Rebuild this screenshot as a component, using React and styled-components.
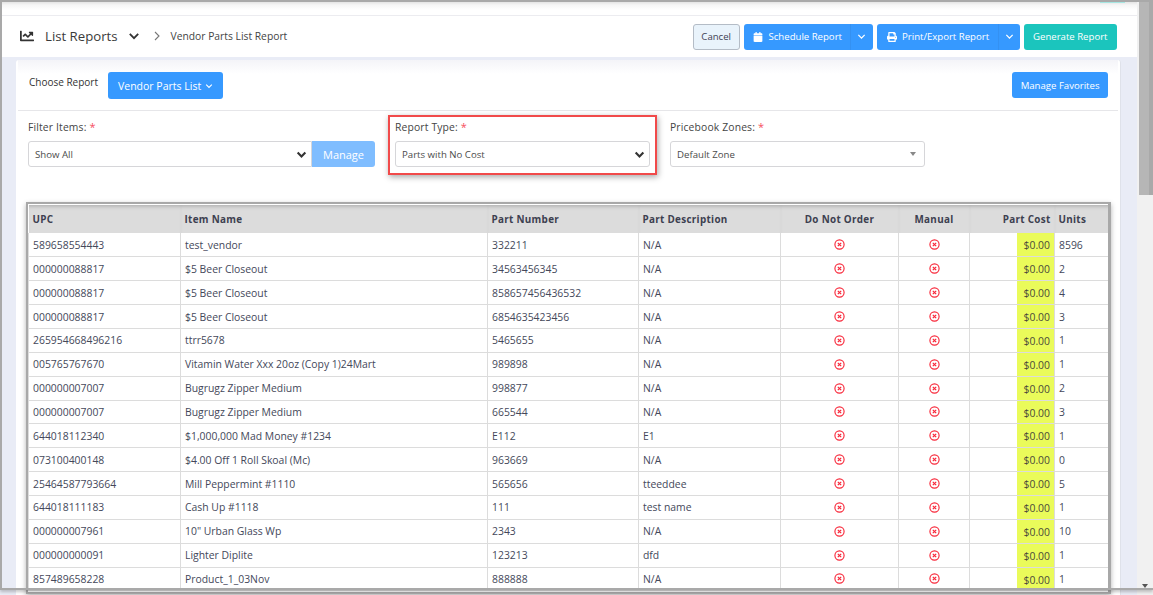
import React from "react";
import styled, { createGlobalStyle } from "styled-components";
import { FaCalendar, FaPrint, FaChartLine } from "react-icons/fa";

const rows = [
  ["589658554443", "test_vendor", "332211", "N/A", "8596"],
  ["000000088817", "$5 Beer Closeout", "34563456345", "N/A", "2"],
  ["000000088817", "$5 Beer Closeout", "858657456436532", "N/A", "4"],
  ["000000088817", "$5 Beer Closeout", "6854635423456", "N/A", "3"],
  ["265954668496216", "ttrr5678", "5465655", "N/A", "1"],
  ["005765767670", "Vitamin Water Xxx 20oz (Copy 1)24Mart", "989898", "N/A", "1"],
  ["000000007007", "Bugrugz Zipper Medium", "998877", "N/A", "2"],
  ["000000007007", "Bugrugz Zipper Medium", "665544", "N/A", "3"],
  ["644018112340", "$1,000,000 Mad Money #1234", "E112", "E1", "1"],
  ["073100400148", "$4.00 Off 1 Roll Skoal (Mc)", "963669", "N/A", "0"],
  ["25464587793664", "Mill Peppermint #1110", "565656", "tteeddee", "5"],
  ["644018111183", "Cash Up #1118", "111", "test name", "1"],
  ["000000007961", "10\" Urban Glass Wp", "2343", "N/A", "10"],
  ["000000000091", "Lighter Diplite", "123213", "dfd", "1"],
  ["857489658228", "Product_1_03Nov", "888888", "N/A", "1"],
];

const columns = [152, 307, 151, 142, 118, 71, 85, 55];

const GlobalStyle = createGlobalStyle`
  html, body { margin: 0; padding: 0; overflow: hidden; }
  body { font-family: "Open Sans", "Liberation Sans", sans-serif; color: #3f4254; }
`;

const Page = styled.div`
  position: relative;
  width: 1153px;
  height: 595px;
  overflow: hidden;
  display: flex;
  background: #fff;
`;

const Main = styled.div`
  width: 1137px;
  height: 595px;
  flex: none;
  box-sizing: border-box;
  padding-left: 2px;
  background: #e9ecf6;
  overflow: hidden;
`;

const TopStrip = styled.div`
  height: 15px;
  box-sizing: content-box;
  background: linear-gradient(#d8d8d8 0, #f6f6f6 5px, #fff 10px);
  border-bottom: 1px solid #ececf0;
  display: flex;
  justify-content: flex-end;
  padding-right: 12px;
`;

const TealSliver = styled.div`
  width: 25px;
  height: 1px;
  margin-top: 2px;
  background: #a6e6e2;
`;

const Header = styled.header`
  height: 41px;
  background: #fff;
  display: flex;
  align-items: center;
  padding: 0 20px 0 18px;
`;

const Title = styled.div`
  display: flex;
  align-items: center;
  padding-bottom: 2px;
  font-size: 13.2px;
  color: #3a3a3a;
  svg { flex: none; }
`;

const TitleText = styled.span`
  margin: 0 10px 0 11px;
`;

const CrumbArrow = styled.svg`
  margin-left: 14px;
`;

const Crumb = styled.span`
  font-size: 10.3px;
  color: #444;
  margin-left: 11px;
`;

const Actions = styled.div`
  margin-left: auto;
  display: flex;
  gap: 4px;
`;

const Button = styled.button`
  height: 26px;
  box-sizing: border-box;
  border: ${(p) => (p.$outline ? "1px solid #b4bcc6" : "none")};
  border-radius: 3px;
  background: ${(p) => (p.$outline ? "#e9f3fb" : p.$teal ? "#1bc5bd" : "#3699ff")};
  color: ${(p) => (p.$outline ? "#3f4254" : "#fff")};
  font-family: inherit;
  font-size: 9.6px;
  padding: 0 ${(p) => p.$pad || 9}px;
  display: flex;
  align-items: center;
  gap: 7px;
  white-space: nowrap;
  svg { flex: none; }
`;

const SplitLabel = styled(Button)`
  width: ${(p) => p.$w}px;
  justify-content: flex-start;
  gap: 5.5px;
  border-radius: 3px 0 0 3px;
`;

const SplitArrow = styled(Button)`
  width: ${(p) => p.$w}px;
  padding: 0;
  justify-content: center;
  border-radius: 0 3px 3px 0;
  border-left: 1px solid #3491f2;
`;

const Split = styled.div`
  display: flex;
`;

const Card = styled.section`
  margin: 3px 0 0 14px;
  width: 1105px;
  height: 540px;
  box-sizing: border-box;
  background: #fff;
  border-right: 1px solid #dfe2ea;
  border-radius: 3px 3px 0 0;
`;

const ChooseRow = styled.div`
  height: 51px;
  margin: 0 2px;
  box-sizing: border-box;
  padding: 12px 10px 0 11px;
  border-bottom: 1px solid #e6e6e9;
  display: flex;
  align-items: flex-start;
  background: linear-gradient(#f4f4f8, #fff 14px);
`;

const ChooseLabel = styled.span`
  font-size: 10px;
  color: #333;
  margin: 3px 10px 0 0;
`;

const ChooseButton = styled(Button)`
  height: 27px;
  font-size: 10.5px;
  padding: 0 10px;
  gap: 4px;
`;

const FavButton = styled(Button)`
  margin-left: auto;
  height: 26px;
  padding: 0 8.5px;
`;

const FilterRow = styled.div`
  display: flex;
  align-items: flex-start;
  padding: 9px 0 0 12px;
  height: 91px;
  box-sizing: border-box;
`;

const FieldBox = styled.div`
  width: ${(p) => p.$w}px;
`;

const Highlight = styled.div`
  width: 269px;
  height: 60px;
  box-sizing: border-box;
  margin: -5px 13px 0 13px;
  border: 2px solid #f14a4a;
  padding: 3px 5px 0;
  box-shadow: 1px 2px 6px rgba(0, 0, 0, 0.35);
  background: #fff;
`;

const Label = styled.label`
  display: block;
  font-size: 10.35px;
  line-height: 14px;
  letter-spacing: 0.15px;
  color: #444;
  margin-bottom: 7px;
  span { color: #f64e60; font-size: 11px; }
`;

const Select = styled.div`
  height: 26px;
  box-sizing: border-box;
  border: 1px solid #d6d6d9;
  border-radius: ${(p) => (p.$joined ? "3px 0 0 3px" : "3px")};
  display: flex;
  align-items: center;
  justify-content: space-between;
  padding: 0 4px 0 6px;
  font-size: 9.65px;
  color: #4b4b4b;
  background: #fff;
  flex: ${(p) => (p.$joined ? "1" : "none")};
`;

const Caret = styled.i`
  width: 0;
  height: 0;
  margin-right: 4px;
  border-left: 3.5px solid transparent;
  border-right: 3.5px solid transparent;
  border-top: 4px solid #888;
`;

const Joined = styled.div`
  display: flex;
`;

const ManageButton = styled.button`
  width: 63px;
  height: 26px;
  border: none;
  border-radius: 0 3px 3px 0;
  background: #7fbdff;
  color: #fff;
  font-family: inherit;
  font-size: 11px;
  padding: 0;
`;

const TableFrame = styled.div`
  margin-left: 10px;
  width: 1085px;
  height: 392px;
  box-sizing: border-box;
  border: 2px solid #a8a8a8;
  border-right-width: 3px;
  padding: 1px 0 0 0;
  box-shadow: 0 2px 5px rgba(0, 0, 0, 0.3);
  overflow: hidden;
`;

const Table = styled.table`
  width: 1081px;
  table-layout: fixed;
  border-collapse: collapse;
  font-size: 10.4px;
`;

const Th = styled.th`
  height: 28px;
  padding: 0 4px;
  background: #dcdcdc;
  font-size: 9.9px;
  font-weight: 700;
  letter-spacing: 0.3px;
  color: #3d4050;
  text-align: ${(p) => p.$align || "left"};
  box-shadow: inset 0 4px 4px -3px rgba(0, 0, 0, 0.25);
`;

const Td = styled.td`
  height: 23.86px;
  box-sizing: border-box;
  padding: 0 4px;
  border: 1px solid #dcdcdc;
  border-top: none;
  text-align: ${(p) => p.$align || "left"};
  color: #44485a;
  white-space: nowrap;
`;

const CostCell = styled(Td)`
  padding: 0;
  text-align: right;
`;

const CostFill = styled.div`
  margin-left: auto;
  width: 37px;
  height: 22.86px;
  line-height: 24px;
  box-sizing: border-box;
  padding-right: 4px;
  background: #eafb5a;
  color: #4a4a3a;
`;

const NoIconSvg = styled.svg`
  display: block;
  margin: 0 auto;
`;

const NoIcon = () => (
  <NoIconSvg width="11" height="11" viewBox="0 0 11 11">
    <circle cx="5.5" cy="5.5" r="4.6" fill="none" stroke="#f8283a" strokeWidth="1.15" />
    <path d="M3.8 3.8l3.4 3.4M7.2 3.8l-3.4 3.4" stroke="#f8283a" strokeWidth="1.2" />
  </NoIconSvg>
);

const Chevron = ({ size = 10, color = "currentColor", width = 1.4 }) => (
  <svg width={size} height={size} viewBox="0 0 10 10" fill="none">
    <path d="M1.5 3.2L5 6.8l3.5-3.6" stroke={color} strokeWidth={width} />
  </svg>
);

const Scrollbar = styled.aside`
  width: 16px;
  height: 595px;
  flex: none;
  background: #f1f1f1;
  position: relative;
`;

const Thumb = styled.div`
  width: 10px;
  height: 195px;
  margin-left: 2px;
  background: #b6b6b6;
  box-shadow: 14px 0 0 0 #a9a9a9, 12px 0 0 0 #a9a9a9, 10px 0 0 0 #a9a9a9;
`;

const ScrollDown = styled.i`
  position: absolute;
  left: 5px;
  bottom: 7px;
  width: 0;
  height: 0;
  border-left: 3.5px solid transparent;
  border-right: 3.5px solid transparent;
  border-top: 4px solid #555;
`;

// the grey window edge lies over everything else
const WindowEdge = styled.div`
  position: absolute;
  left: 0;
  top: 0;
  width: 1153px;
  height: 590px;
  box-sizing: border-box;
  border: 2px solid #a9a9a9;
  border-right: none;
  box-shadow: 0 2px 3px rgba(0, 0, 0, 0.22);
  pointer-events: none;
`;

export default function App() {
  return (
    <Page>
      <GlobalStyle />
      <Main>
        <TopStrip>
          <TealSliver />
        </TopStrip>
        <Header>
          <Title>
            <FaChartLine size={14} color="#333" />
            <TitleText>List Reports</TitleText>
            <Chevron size={12} color="#333" width={1.5} />
            <CrumbArrow width="6" height="10" viewBox="0 0 6 10" fill="none">
              <path d="M1 1l4 4-4 4" stroke="#777" strokeWidth="1.1" />
            </CrumbArrow>
            <Crumb>Vendor Parts List Report</Crumb>
          </Title>
          <Actions>
            <Button $outline $pad={7.5}>Cancel</Button>
            <Split>
              <SplitLabel $w={106} $pad={9.5}>
                <FaCalendar size={10} /> Schedule Report
              </SplitLabel>
              <SplitArrow $w={23}><Chevron size={9} /></SplitArrow>
            </Split>
            <Split>
              <SplitLabel $w={121} $pad={10}>
                <FaPrint size={10} /> Print/Export Report
              </SplitLabel>
              <SplitArrow $w={22}><Chevron size={9} /></SplitArrow>
            </Split>
            <Button $teal $pad={9.5}>Generate Report</Button>
          </Actions>
        </Header>
        <Card>
          <ChooseRow>
            <ChooseLabel>Choose Report</ChooseLabel>
            <ChooseButton>
              Vendor Parts List <Chevron size={8} />
            </ChooseButton>
            <FavButton>Manage Favorites</FavButton>
          </ChooseRow>
          <FilterRow>
            <FieldBox $w={347}>
              <Label>Filter Items: <span>*</span></Label>
              <Joined>
                <Select $joined>
                  Show All
                  <Chevron size={11} color="#333" width={1.9} />
                </Select>
                <ManageButton>Manage</ManageButton>
              </Joined>
            </FieldBox>
            <Highlight>
              <Label>Report Type: <span>*</span></Label>
              <Select>
                Parts with No Cost
                <Chevron size={11} color="#333" width={1.9} />
              </Select>
            </Highlight>
            <FieldBox $w={255}>
              <Label>Pricebook Zones: <span>*</span></Label>
              <Select>
                Default Zone
                <Caret />
              </Select>
            </FieldBox>
          </FilterRow>
          <TableFrame>
            <Table>
              <colgroup>
                {columns.map((w, i) => <col key={i} style={{ width: w }} />)}
              </colgroup>
              <thead>
                <tr>
                  <Th>UPC</Th>
                  <Th>Item Name</Th>
                  <Th>Part Number</Th>
                  <Th>Part Description</Th>
                  <Th $align="center">Do Not Order</Th>
                  <Th $align="center">Manual</Th>
                  <Th $align="right">Part Cost</Th>
                  <Th>Units</Th>
                </tr>
              </thead>
              <tbody>
                {rows.map((r, i) => (
                  <tr key={i}>
                    <Td>{r[0]}</Td>
                    <Td>{r[1]}</Td>
                    <Td>{r[2]}</Td>
                    <Td>{r[3]}</Td>
                    <Td $align="center"><NoIcon /></Td>
                    <Td $align="center"><NoIcon /></Td>
                    <CostCell><CostFill>$0.00</CostFill></CostCell>
                    <Td>{r[4]}</Td>
                  </tr>
                ))}
              </tbody>
            </Table>
          </TableFrame>
        </Card>
      </Main>
      <Scrollbar>
        <Thumb />
        <ScrollDown />
      </Scrollbar>
      <WindowEdge />
    </Page>
  );
}
